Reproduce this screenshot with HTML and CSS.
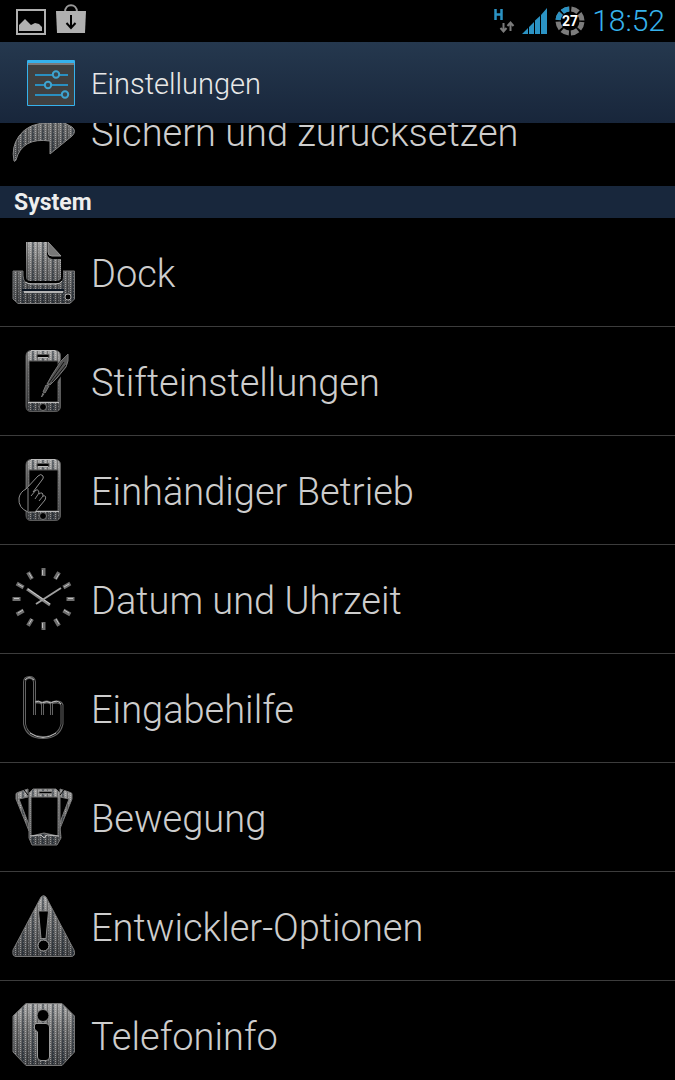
FILE: index.html
```html
<!DOCTYPE html>
<html lang="de">
<head>
<meta charset="utf-8">
<meta name="viewport" content="width=device-width, initial-scale=1">
<title>Einstellungen</title>
<link rel="stylesheet" href="styles.css">
</head>
<body>
<svg class="defs" width="0" height="0" aria-hidden="true">
  <defs>
    <linearGradient id="shade" gradientUnits="userSpaceOnUse" x1="0" y1="0" x2="0" y2="64">
      <stop offset="0" stop-color="#aaa"/><stop offset=".35" stop-color="#787878"/><stop offset="1" stop-color="#3c3e41"/>
    </linearGradient>
    <pattern id="mesh" width="10" height="64" patternUnits="userSpaceOnUse">
      <rect width="10" height="64" fill="url(#shade)"/>
      <rect x="0" width="2" height="64" fill="#101a26" opacity=".45"/>
      <rect x="5" width="1" height="64" fill="#000" opacity=".3"/>
      <path d="M3.5 0v64M8.5 0v64" stroke="#e2e2e2" stroke-width="1" stroke-dasharray="1 1" opacity=".5"/>
      <path d="M1.5 0v64M6.5 0v64" stroke="#ddd" stroke-width="1" stroke-dasharray="1 2" opacity=".25"/>
    </pattern>
    <g id="phone">
      <path fill="url(#mesh)" fill-rule="evenodd" stroke="#5a5a5a" d="M19 1.500H43.500Q48.500 2 48.500 7V57Q48.500 62.500 43.500 62.500H19Q14 62.500 14 57V7Q14 2 19 1.500ZM17 12V53H46V12ZM25 5.500V8.500H37V5.500Z"/>
      <path d="M19 1.500H43.500M26 8.500H36M16 53.500H47" stroke="#bbb"/>
      <circle cx="31" cy="58" r="3.500" fill="#000" stroke="#777"/>
    </g>
  </defs>
</svg>

<div class="status">
  <div class="status-group">
    <svg class="photo" width="30" height="26" viewBox="0 0 30 26" role="img" aria-label="Bild gespeichert">
      <rect x="1" y="1" width="28" height="24" fill="none" stroke="#b0b0b0" stroke-width="2"/>
      <path fill="#b0b0b0" d="M3 22V16L9 10L15 16L19 14L23 15L26 18V22Z"/>
    </svg>
    <svg class="bag" width="30" height="30" viewBox="0 0 30 30" role="img" aria-label="Download">
      <path d="M9 8C9 -1 21 -1 21 8" fill="none" stroke="#999" stroke-width="2"/>
      <path d="M0 7H30L29 29H1Z" fill="#b0b0b0"/>
      <path d="M15 11V23M10.500 19L15 24L19.500 19" fill="none" stroke="#000" stroke-width="2"/>
    </svg>
  </div>
  <div class="status-group right">
    <svg width="22" height="26" viewBox="0 0 22 26" role="img" aria-label="Mobile Daten">
      <path d="M2.500 1V12M8.500 1V12M3 6.500H8" stroke="#2b93c4" stroke-width="2.500"/>
      <path d="M10.500 15V23M7.500 20L10.500 23.500L13.500 20M17.500 23V15M14.500 18L17.500 14.500L20.500 18" stroke="#7b7b7b" stroke-width="2" fill="none"/>
    </svg>
    <svg width="26" height="26" viewBox="0 0 26 26" role="img" aria-label="Empfang">
      <path fill="#2b93c4" d="M0 26L6 20V26ZM7 19L12 14V26H7ZM13 12.500L18 8V26H13ZM19 7L25 0V26H19Z"/>
    </svg>
    <div class="battery">
      <svg width="30" height="30" viewBox="0 0 30 30" aria-hidden="true">
        <circle cx="15" cy="15" r="12" fill="none" stroke="#7c7c7c" stroke-width="5" stroke-dasharray="7.425 2" stroke-dashoffset="-1"/>
        <path d="M3 14A12 12 0 0 1 5.800 7.300M7.300 5.800A12 12 0 0 1 14 3" fill="none" stroke="#2b93c4" stroke-width="5"/>
      </svg>
      <span class="battery-level">27</span>
    </div>
    <time class="time">18:52</time>
  </div>
</div>

<header class="bar">
  <svg width="48" height="46" viewBox="0 0 48 46" aria-hidden="true">
    <rect width="48" height="46" rx="1" fill="#36b2ec"/>
    <rect x="1" y="3" width="46" height="42" fill="#404040"/>
    <path d="M1 4H47" stroke="#b5b5b5"/>
    <path d="M8 15H41M8 25H41M8 35H41" stroke="#2a8fc0" stroke-width="2"/>
    <g fill="#3a464d" stroke="#3fa4d0" stroke-width="2"><circle cx="29" cy="14.500" r="3.200"/><circle cx="21" cy="25" r="3.200"/><circle cx="38" cy="34.500" r="3.200"/></g>
  </svg>
  <h1 class="title">Einstellungen</h1>
</header>

<main class="content">
  <div class="scroll">
    <a class="row last" href="#backup">
      <svg class="icon" viewBox="0 0 64 64" aria-hidden="true">
        <path fill="url(#mesh)" stroke="#888" d="M2 62Q-1 48 7 37Q17 23 38 24V16L60 28Q65 32 60 37L38 55V42Q10 38 4 61Q3 63 2 62Z"/>
      </svg>
      <span class="label">Sichern und zurücksetzen</span>
    </a>
    <h2 class="section">System</h2>
    <a class="row" href="#dock">
      <svg class="icon" viewBox="0 0 64 64" aria-hidden="true">
        <path fill="url(#mesh)" stroke="#777" d="M1 31H11V36Q12 43 18 43H46Q51 43 51 36V31H62.500V59L58 63.500H6L1 59Z"/>
        <path fill="url(#mesh)" stroke="#000" stroke-width="2" d="M13 1H36V14Q37 18 41 18H50V37Q50 42 45 42H18Q13 42 13 37Z"/>
        <path d="M14 42Q15 44 20 44H44Q48 44 50 41" fill="none" stroke="#bbb"/>
        <path d="M36 2L49 16H40Q36 16 36 12Z" fill="#777" stroke="#999"/>
        <path d="M10 50H52" stroke="#0b1522" stroke-width="2"/><path d="M12 52H51" stroke="#b4b4b4" stroke-width="2"/>
        <circle cx="56" cy="57" r="3" fill="#000" stroke="#aaa"/>
      </svg>
      <span class="label">Dock</span>
    </a>
    <a class="row" href="#stift">
      <svg class="icon" viewBox="0 0 64 64" aria-hidden="true">
        <use href="#phone"/>
        <path d="M57 3L48 12L34 33L28 49L31 49L45 33L55 19Q58 12 57 3Z" fill="#000"/>
        <path d="M56 5L49 12L40 26L35 35L38 36L45 29L54 18Q57 12 56 5ZM34 36L31 43L33 44L37 37ZM31 44L29.500 48L32 45" fill="#555" stroke="#777" stroke-width="1"/>
        <path d="M37 34L52 13M40 33L54 16" stroke="#111"/>
      </svg>
      <span class="label">Stifteinstellungen</span>
    </a>
    <a class="row" href="#einhand">
      <svg class="icon" viewBox="0 0 64 64" aria-hidden="true">
        <use href="#phone"/>
        <path d="M16 54Q6 50 7 40Q8 34 14 31L26 18Q29 15 31 18Q32 20 30 22L21 34L24 32Q27 31 27 36Q31 33 31 38Q35 37 33 42L23 54Z" fill="#000" stroke="#909090" stroke-width="1"/>
        <path d="M16 30V53M24 32L19 38M27 35L23 41M31 38L27 43" stroke="#888" stroke-width="1" fill="none"/>
      </svg>
      <span class="label">Einhändiger Betrieb</span>
    </a>
    <a class="row" href="#datum">
      <svg class="icon" viewBox="0 0 64 64" aria-hidden="true">
        <g stroke="#6e6e6e" stroke-width="4">
          <path d="M31.500 1V9M31.500 55V63M.5 32H8.500M54.500 32H62.500"/>
          <path d="M16 5.200L20 12.100M43 51.900L47 58.800M47 5.200L43 12.100M20 51.900L16 58.800M4.700 16.500L11.600 20.500M51.400 43.500L58.300 47.500M58.300 16.500L51.400 20.500M11.600 43.500L4.700 47.500"/>
        </g>
        <path d="M30.500 3V8M30.500 56V61M2 31.500H7M56 31.500H61M17 6L20 11M44 52L47 57M47 7L44 12M20 52L17 57M6 17L11 20M52 43L57 46M57 17L52 20M11 43L6 46" stroke="#c0c0c0" stroke-width="1"/>
        <path d="M15 22L38 38" stroke="#858585" stroke-width="3"/><path d="M16 22L38 37" stroke="#ccc" stroke-width="1"/>
        <path d="M24 37L49 21" stroke="#a0a0a0" stroke-width="2"/>
      </svg>
      <span class="label">Datum und Uhrzeit</span>
    </a>
    <a class="row" href="#eingabehilfe">
      <svg class="icon" viewBox="0 0 64 64" aria-hidden="true">
        <path fill="none" stroke="#626262" stroke-width="3" d="M22.500 39V6Q22 1.500 17.500 1.500Q12.500 1.500 12.500 6V48Q15 61.500 31 61.500Q47 61.500 50 48V29Q49 26 45 26Q40 26 39.500 28Q38 26 35 26Q31 26 30.500 28Q29 26 26 26H23M30.500 27V39M39.500 27V39"/>
        <path fill="none" stroke="#060606" stroke-width="1" d="M22.500 39V6Q22 1.500 17.500 1.500Q12.500 1.500 12.500 6V48Q15 61.500 31 61.500Q47 61.500 50 48V29Q49 26 45 26M30.500 27V39M39.500 27V39"/>
        <path fill="none" stroke="#bbb" stroke-width="1" d="M13 4Q17 -1 22 4M23 26Q27 24 30 27Q35 24 39 27Q45 23 49 28M18 57Q31 66 44 57"/>
      </svg>
      <span class="label">Eingabehilfe</span>
    </a>
    <a class="row" href="#bewegung">
      <svg class="icon" viewBox="0 0 64 64" aria-hidden="true">
        <path fill="url(#mesh)" stroke="#777" d="M4 10Q3 8 7 7L16 4V12L7 14L17 40V46L4 14ZM60 10Q61 8 57 7L48 4V12L57 14L47 40V46L60 14Z"/>
        <path fill="url(#mesh)" fill-rule="evenodd" stroke="#777" d="M21 4H44L48 8V42L49 53L45 60H20L17 53V8ZM19 12V51L32 48L46 51V12ZM27 6.500V8.500H40V6.500Z"/>
        <path d="M18 51L29 50L32 53L35 50L47 51" fill="none" stroke="#bbb"/>
        <path d="M12 5L16 10M52 5L48 10" stroke="#000" stroke-width="1"/>
      </svg>
      <span class="label">Bewegung</span>
    </a>
    <a class="row" href="#entwickler">
      <svg class="icon" viewBox="0 0 64 64" aria-hidden="true">
        <path fill="url(#mesh)" stroke="#777" d="M29 3Q31.500 0 34 3L62 56Q64 62.500 59 62.500H4Q0 62.500 1 56Z"/>
        <path fill="#000" stroke="#888" d="M26.500 17H36.500L34 44.500H29Z"/><circle cx="31.500" cy="51.500" r="5.500" fill="#000" stroke="#aaa"/>
      </svg>
      <span class="label">Entwickler-Optionen</span>
    </a>
    <a class="row" href="#telefoninfo">
      <svg class="icon" viewBox="0 0 64 64" aria-hidden="true">
        <path fill="url(#mesh)" stroke="#777" d="M14 .5H50L62.500 13V49L50 62.500H14L1 49V13Z"/>
        <circle cx="31" cy="12.500" r="6" fill="#000" stroke="#888"/>
        <path fill="#000" stroke="#999" d="M24 20.500H34Q37.500 20.500 37.500 24V54Q37.500 57.500 34 57.500H29Q25.500 57.500 25.500 54V29L22.500 26V22Z"/>
      </svg>
      <span class="label">Telefoninfo</span>
    </a>
  </div>
</main>
</body>
</html>
```
FILE: styles.css
```css
* {
  box-sizing: border-box;
}

body {
  margin: 0;
  height: 100vh;
  display: flex;
  flex-direction: column;
  overflow: hidden;
  background: #000;
  color: #cdcdcd;
  font-family: Roboto, "Noto Sans", sans-serif;
  font-weight: 300;
}

svg {
  display: block;
  flex: none;
}

.defs {
  position: absolute;
}

.status {
  flex: none;
  display: flex;
  align-items: center;
  justify-content: space-between;
  height: 42px;
  padding: 0 10px 0 16px;
}

.status-group {
  display: flex;
  align-items: center;
  gap: 10px;
}

.right {
  gap: 7px;
}

.photo {
  margin-top: 2px;
}

.bag {
  margin-bottom: 4px;
}

.battery {
  display: grid;
  place-items: center;
}

.battery > * {
  grid-area: 1 / 1;
}

.battery-level {
  color: #fff;
  font-size: 14px;
  font-weight: 700;
  line-height: 16px;
}

.time {
  color: #36b2ec;
  font-size: 30px;
  line-height: 40px;
}

.bar {
  flex: none;
  display: flex;
  align-items: center;
  gap: 16px;
  height: 81px;
  padding-left: 27px;
  background: linear-gradient(#25384e, #18263b);
}

.title {
  margin: 0;
  padding-top: 2px;
  color: #e8e8e8;
  font-size: 29px;
  font-weight: 300;
  line-height: 40px;
}

.content {
  flex: 1;
  min-height: 0;
  overflow: hidden;
}

/* The list is shown partly scrolled under the title bar. */
.scroll {
  margin-top: -46px;
}

.row {
  display: flex;
  align-items: center;
  gap: 15px;
  height: 109px;
  padding-left: 12px;
  border-bottom: 1px solid #3c3c3c;
  color: inherit;
  font-size: 38px;
  line-height: 48px;
  text-decoration: none;
  white-space: nowrap;
}

.label {
  padding-top: 4px;
}

.last {
  border-bottom-color: transparent;
}

.icon {
  width: 64px;
  height: 64px;
}

.section {
  margin: 0;
  padding: 2px 14px 0;
  background: #18273c;
  color: #eee;
  font-size: 23px;
  font-weight: 700;
  line-height: 30px;
}
```
